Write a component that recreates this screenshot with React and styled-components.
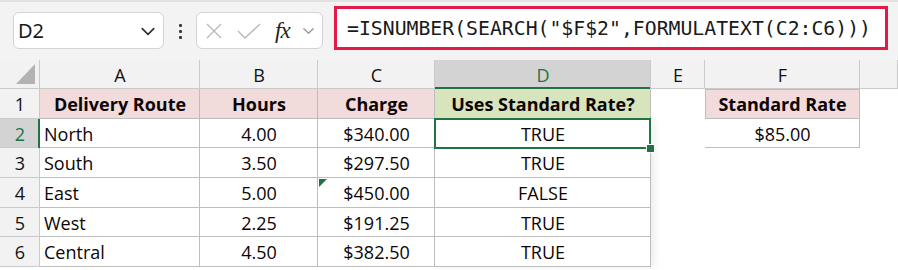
import React from 'react'
import styled, { createGlobalStyle, css } from 'styled-components'

const GlobalStyle = createGlobalStyle`
  html, body { margin: 0; padding: 0; background: #fff; }
  body { font-family: "Open Sans", "Noto Sans", sans-serif; }
`

const green = '#217346'
const grid = '#bdbdbd'
const headLine = '#cacaca'

const Page = styled.div`
  width: 898px;
  height: 270px;
  overflow: hidden;
  background: #fff;
`

// formula bar
const Toolbar = styled.div`
  height: 60px;
  box-sizing: border-box;
  background: #f3f3f3;
  border-top: 2px solid #e2e2e2;
  display: flex;
  align-items: flex-start;
  padding-left: 13px;
`
const Pill = styled.div`
  margin-top: 10px;
  height: 37px;
  width: ${p => p.$w}px;
  box-sizing: border-box;
  background: #fff;
  border: 1px solid #d3d3d3;
  border-radius: 6px;
  display: flex;
  align-items: center;
  padding: 0 7px 0 4px;
`
const NameText = styled.span`
  flex: 1;
  font-family: "Noto Sans", "Open Sans", sans-serif;
  font-size: 20px;
  color: #1b1b1b;
`
const Dots = styled.div`
  width: 32px;
  height: 58px;
  display: flex;
  flex-direction: column;
  align-items: center;
  justify-content: center;
  gap: 3px;
  span { width: 3px; height: 3px; background: #3b3b3b; border-radius: 1px; }
`
const FxIcons = styled.div`
  display: flex;
  align-items: center;
  gap: 14px;
  padding-left: 4px;
`
const Fx = styled.span`
  font-family: "Liberation Serif", "DejaVu Serif", serif;
  font-style: italic;
  font-size: 23px;
  color: #222;
  letter-spacing: -1px;
`
const FormulaBox = styled.div`
  margin-left: 11px;
  margin-top: 4px;
  width: 554px;
  height: 44px;
  box-sizing: border-box;
  background: #fff;
  border: 3px solid #e11a48;
  display: flex;
  align-items: center;
  padding-left: 10px;
  font-family: "DejaVu Sans Mono", "Liberation Mono", monospace;
  font-size: 19.8px;
  color: #1a1a1a;
  white-space: nowrap;
`

// sheet
const Sheet = styled.div`
  display: grid;
  grid-template-columns: 40px 160px 118px 117px 216px 54px 155px 38px;
  grid-template-rows: 29px 30px 29px 30px 30px 29px 30px 3px;
`
const place = css`
  grid-column: ${p => p.$c};
  grid-row: ${p => p.$r};
`
const ColHead = styled.div`
  ${place}
  background: ${p => (p.$active ? '#d3d3d3' : '#f2f2f2')};
  color: ${p => (p.$active ? green : '#111')};
  box-shadow: inset -1px 0 0 ${headLine}, inset 0 ${p => (p.$active ? '-2px 0 ' + green : '-1px 0 ' + headLine)};
  display: flex;
  align-items: center;
  justify-content: center;
  font-size: 18px;
`
const RowHead = styled.div`
  ${place}
  background: ${p => (p.$active ? '#d3d3d3' : '#f2f2f2')};
  color: ${p => (p.$active ? green : '#111')};
  box-shadow: inset ${p => (p.$active ? '-2px 0 0 ' + green : '-1px 0 0 ' + headLine)}, inset 0 -1px 0 ${headLine};
  display: flex;
  align-items: center;
  justify-content: center;
  font-size: 18px;
`
const Corner = styled.div`
  grid-column: 1;
  grid-row: 1;
  background: #f2f2f2;
  box-shadow: inset -1px 0 0 ${headLine}, inset 0 -1px 0 ${headLine};
  display: flex;
  align-items: flex-end;
  justify-content: flex-end;
  padding: 0 5px 5px 0;
  &::after {
    content: '';
    width: 19px;
    height: 20px;
    background: #b3b3b3;
    clip-path: polygon(100% 0, 100% 100%, 0 100%);
  }
`
const Cell = styled.div`
  ${place}
  position: relative;
  background: ${p => p.$bg || '#fff'};
  display: flex;
  align-items: center;
  justify-content: ${p => (p.$left ? 'flex-start' : 'center')};
  padding-left: ${p => (p.$left ? '4px' : '0')};
  font-size: 18px;
  font-weight: ${p => (p.$bold ? 700 : 400)};
  color: #0d0505;
  white-space: nowrap;
  ${p => p.$boxed && css`
    box-shadow: inset -1px -1px 0 ${grid} ${p.$edge ? `, inset 1px 1px 0 ${grid}` : ''};
  `}
  ${p => p.$flag && css`
    &::before {
      content: '';
      position: absolute;
      left: 1px;
      top: 1px;
      width: 8px;
      height: 8px;
      background: ${green};
      clip-path: polygon(0 0, 100% 0, 0 100%);
    }
  `}
`
const RangeOutline = styled.div`
  grid-column: 5;
  grid-row: 3 / 8;
  border: 1.5px solid #4a74c2;
  margin-left: -1px;
  box-shadow: 4px 0 7px rgba(0, 0, 0, 0.07);
  pointer-events: none;
`
const ActiveOutline = styled.div`
  grid-column: 5;
  grid-row: 3;
  position: relative;
  border: 2px solid ${green};
  margin: -1px 0 -1px -1px;
  pointer-events: none;
  &::after {
    content: '';
    position: absolute;
    right: -6px;
    bottom: -6px;
    width: 7px;
    height: 7px;
    background: ${green};
    border: 1px solid #fff;
  }
`

const cols = ['A', 'B', 'C', 'D', 'E', 'F', '']
const rows = [
  ['North', '4.00', '$340.00', 'TRUE'],
  ['South', '3.50', '$297.50', 'TRUE'],
  ['East', '5.00', '$450.00', 'FALSE'],
  ['West', '2.25', '$191.25', 'TRUE'],
  ['Central', '4.50', '$382.50', 'TRUE'],
]
const pink = '#f2dcdb'

const Chevron = ({ size = 14, color = '#333' }) => (
  <svg width={size} height={size} viewBox="0 0 14 14">
    <path d="M2 5 L7 10 L12 5" fill="none" stroke={color} strokeWidth="1.5" strokeLinecap="round" strokeLinejoin="round" />
  </svg>
)

export default function App() {
  return (
    <Page>
      <GlobalStyle />
      <Toolbar>
        <Pill $w={151}>
          <NameText>D2</NameText>
          <Chevron size={16} />
        </Pill>
        <Dots><span /><span /><span /></Dots>
        <Pill $w={127}>
          <FxIcons>
            <svg width="18" height="18" viewBox="0 0 18 18">
              <path d="M2 2 L16 16 M16 2 L2 16" stroke="#b8b8b8" strokeWidth="1.4" />
            </svg>
            <svg width="24" height="18" viewBox="0 0 24 18">
              <path d="M1 9 L8 16 L23 2" fill="none" stroke="#b8b8b8" strokeWidth="1.4" />
            </svg>
            <Fx>fx</Fx>
          </FxIcons>
          <span style={{ flex: 1 }} />
          <Chevron size={13} color="#999" />
        </Pill>
        <FormulaBox>=ISNUMBER(SEARCH("$F$2",FORMULATEXT(C2:C6)))</FormulaBox>
      </Toolbar>
      <Sheet>
        <Corner />
        {cols.map((c, i) => (
          <ColHead key={i} $r={1} $c={i + 2} $active={c === 'D'}>{c}</ColHead>
        ))}

        <RowHead $r={2} $c={1}>1</RowHead>
        <Cell $r={2} $c={2} $bg={pink} $bold $boxed>Delivery Route</Cell>
        <Cell $r={2} $c={3} $bg={pink} $bold $boxed>Hours</Cell>
        <Cell $r={2} $c={4} $bg={pink} $bold $boxed>Charge</Cell>
        <Cell $r={2} $c={5} $bg="#d8e4bc" $bold $boxed>Uses Standard Rate?</Cell>
        <Cell $r={2} $c={7} $bg={pink} $bold $boxed $edge>Standard Rate</Cell>
        <Cell $r={3} $c={7} $boxed>$85.00</Cell>

        {rows.map((r, i) => (
          <React.Fragment key={i}>
            <RowHead $r={i + 3} $c={1} $active={i === 0}>{i + 2}</RowHead>
            <Cell $r={i + 3} $c={2} $left $boxed>{r[0]}</Cell>
            <Cell $r={i + 3} $c={3} $boxed>{r[1]}</Cell>
            <Cell $r={i + 3} $c={4} $boxed $flag={i === 2}>{r[2]}</Cell>
            <Cell $r={i + 3} $c={5} $boxed>{r[3]}</Cell>
          </React.Fragment>
        ))}
        <RangeOutline />
        <ActiveOutline />
      </Sheet>
    </Page>
  )
}
